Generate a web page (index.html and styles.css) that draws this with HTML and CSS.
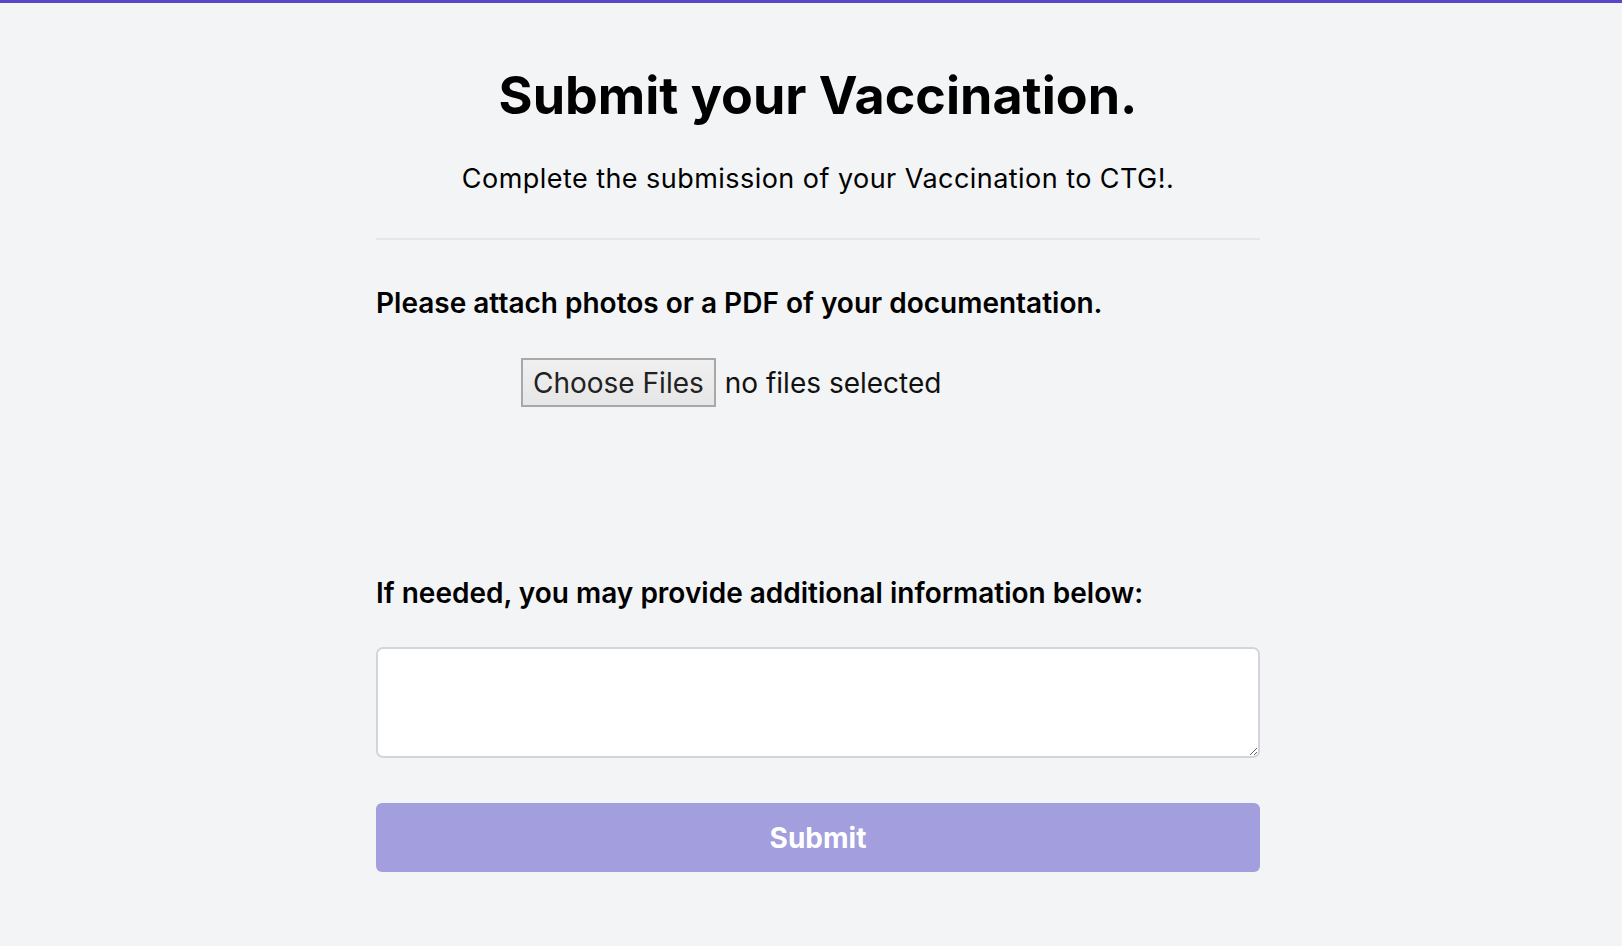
FILE: index.html
```html
<!DOCTYPE html>
<html lang="en">
<head>
<meta charset="utf-8">
<title>Submit your Vaccination</title>
<link rel="stylesheet" href="styles.css">
</head>
<body>
<main class="page">
  <header class="intro">
    <h1 class="title">Submit your Vaccination.</h1>
    <p class="subtitle">Complete the submission of your Vaccination to CTG!.</p>
  </header>
  <form class="form">
    <label class="label">Please attach photos or a PDF of your documentation.</label>
    <div class="file-row">
      <span class="file-btn">Choose Files</span>
      <span class="file-status">no files selected</span>
    </div>
    <label class="label label-extra">If needed, you may provide additional information below:</label>
    <textarea class="notes"></textarea>
    <button type="button" class="submit">Submit</button>
  </form>
</main>
</body>
</html>
```
FILE: styles.css
```css
html, body {
  margin: 0;
  padding: 0;
}
html {
  background: #f3f4f6;
}
body {
  border-top: 3px solid #5846c8;
  font-family: Inter, "Noto Sans", "Liberation Sans", sans-serif;
  color: #000;
}
.page {
  width: 884px;
  margin-left: calc(50% - 435px);
  padding-top: 62px;
}
.intro {
  text-align: center;
  border-bottom: 2px solid #e5e7eb;
  padding-bottom: 41px;
}
.title {
  margin: 0;
  font-size: 52px;
  line-height: 62px;
  font-weight: 700;
}
.subtitle {
  margin: 34px 0 0;
  font-size: 27px;
  line-height: 36px;
  font-weight: 400;
  letter-spacing: 0.45px;
}
.form {
  display: flex;
  flex-direction: column;
  padding-top: 47px;
}
.label {
  font-size: 28px;
  line-height: 32px;
  font-weight: 600;
}
.file-row {
  display: flex;
  align-items: center;
  gap: 9px;
  margin: 39px 0 0 145px;
  font-size: 28px;
}
.file-btn {
  box-sizing: border-box;
  height: 49px;
  padding: 0 10px;
  display: flex;
  align-items: center;
  border: 2px solid #a8a8a8;
  background: linear-gradient(#f0f0f0, #e6e6e6);
  color: #222;
}
.file-status {
  color: #111;
}
.label-extra {
  margin-top: 170px;
}
.notes {
  box-sizing: border-box;
  margin-top: 38px;
  width: 100%;
  height: 111px;
  border: 2px solid #d4d5da;
  border-radius: 7px;
  background: #fff;
  resize: vertical;
}
.submit {
  margin-top: 45px;
  height: 69px;
  border: none;
  border-radius: 6px;
  background: #a39ede;
  color: #fff;
  font-family: inherit;
  font-size: 28px;
  font-weight: 700;
}
```
